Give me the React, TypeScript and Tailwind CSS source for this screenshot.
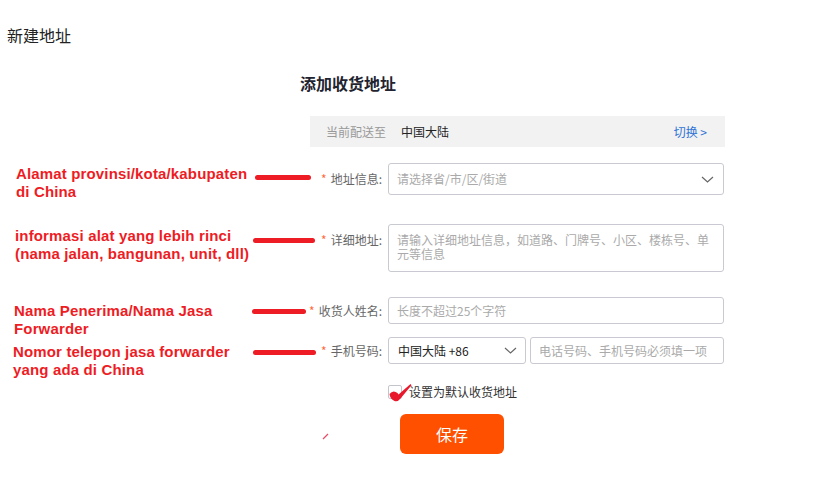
import { ReactNode } from "react";

const cjk = { fontFamily: '"Noto Sans CJK SC", "Noto Sans", sans-serif' };

interface NoteRowProps {
  note: ReactNode;
  notePad: string;
  lineClass: string;
  label: string;
  labelLeading: string;
  rowClass: string;
  children: ReactNode;
}

function NoteRow({ note, notePad, lineClass, label, labelLeading, rowClass, children }: NoteRowProps) {
  return (
    <div className={`flex items-start w-[724px] ${rowClass}`}>
      {/* annotation */}
      <div
        className={`w-[252px] shrink-0 font-bold text-[15px] leading-[18px] tracking-[0.15px] text-[#ee1c24] whitespace-nowrap ${notePad}`}
        style={{ fontFamily: '"Liberation Sans", Arial, sans-serif' }}
      >
        {note}
      </div>
      <div className={`shrink-0 h-[4.5px] rounded-full bg-[#ee1c24] ${lineClass}`} />
      {/* label */}
      <div className={`flex-1 text-right pr-[6px] text-[12px] text-[#666] whitespace-nowrap ${labelLeading}`}>
        <span className="text-[#ff6a3d] mr-[4px]">*</span>
        {label}:
      </div>
      <div className="w-[336px] shrink-0">{children}</div>
    </div>
  );
}

function Chevron() {
  return (
    <svg width="13" height="7" viewBox="0 0 13 7" fill="none">
      <polyline points="1,1 6.5,6 12,1" stroke="#666" strokeWidth="1.2" />
    </svg>
  );
}

export default function App() {
  return (
    <div className="w-[832px] h-[491px] bg-white overflow-hidden text-[#333]" style={cjk}>
      {/* page title */}
      <p className="pt-[26px] pl-[7px] text-[16px] leading-[18px] text-[#222]">新建地址</p>

      <h1 className="ml-[300px] mt-[28px] text-[16px] leading-[22px] font-bold text-[#1f2430]">添加收货地址</h1>

      {/* delivery region bar */}
      <div className="ml-[310px] mt-[22px] w-[415px] h-[31px] bg-[#f2f2f2] flex items-center pl-[16px] pr-[18px] text-[12px]">
        <span className="text-[#999]">当前配送至</span>
        <span className="ml-[15px] text-[#222]">中国大陆</span>
        <span className="ml-auto text-[#2f73d6]">切换 &gt;</span>
      </div>

      {/* address */}
      <NoteRow
        rowClass="mt-[16px] h-[32px]"
        notePad="pl-[16px] mt-[2px]"
        lineClass="ml-[3px] w-[56px] mt-[12px]"
        label="地址信息"
        labelLeading="leading-[32px]"
        note={
          <>
            Alamat provinsi/kota/kabupaten
            <br />
            di China
          </>
        }
      >
        <div className="h-[32px] border border-[#c9c9d2] rounded-[3px] flex items-center pl-[8px] pr-[9px] text-[12px] text-[#aaa]">
          <span>请选择省/市/区/街道</span>
          <span className="ml-auto flex">
            <Chevron />
          </span>
        </div>
      </NoteRow>

      {/* detail */}
      <NoteRow
        rowClass="mt-[29px] h-[48px]"
        notePad="pl-[15px] mt-[3px]"
        lineClass="ml-[1px] w-[62px] mt-[14px]"
        label="详细地址"
        labelLeading="leading-[32px]"
        note={
          <>
            informasi alat yang lebih rinci
            <br />
            (nama jalan, bangunan, unit, dll)
          </>
        }
      >
        <textarea
          className="block w-full h-[48px] border border-[#c9c9d2] rounded-[3px] pl-[8px] pr-[8px] pt-[8px] text-[12px] leading-[14px] resize-none overflow-hidden outline-none placeholder:text-[#aaa]"
          style={cjk}
          placeholder="请输入详细地址信息，如道路、门牌号、小区、楼栋号、单元等信息"
        />
      </NoteRow>

      {/* name */}
      <NoteRow
        rowClass="mt-[25px] h-[27px]"
        notePad="pl-[14px] mt-[5px]"
        lineClass="ml-0 w-[54px] mt-[12px]"
        label="收货人姓名"
        labelLeading="leading-[27px]"
        note={
          <>
            Nama Penerima/Nama Jasa
            <br />
            Forwarder
          </>
        }
      >
        <input
          className="block w-full h-[27px] border border-[#c9c9d2] rounded-[3px] px-[8px] text-[12px] outline-none placeholder:text-[#aaa]"
          style={cjk}
          placeholder="长度不超过25个字符"
        />
      </NoteRow>

      {/* phone */}
      <NoteRow
        rowClass="mt-[13px] h-[27px]"
        notePad="pl-[13px] mt-[6px]"
        lineClass="ml-[1px] w-[63px] mt-[13px]"
        label="手机号码"
        labelLeading="leading-[27px]"
        note={
          <>
            Nomor telepon jasa forwarder
            <br />
            yang ada di China
          </>
        }
      >
        <div className="flex gap-[4px]">
          <div className="w-[138px] h-[27px] border border-[#c9c9d2] rounded-[3px] flex items-center pl-[9px] pr-[8px] text-[12px] text-[#222]">
            <span>中国大陆 +86</span>
            <span className="ml-auto flex">
              <Chevron />
            </span>
          </div>
          <input
            className="flex-1 min-w-0 h-[27px] border border-[#c9c9d2] rounded-[3px] px-[8px] text-[12px] outline-none placeholder:text-[#aaa]"
            style={cjk}
            placeholder="电话号码、手机号码必须填一项"
          />
        </div>
      </NoteRow>

      {/* default checkbox */}
      <div className="ml-[388px] mt-[20px] flex items-center h-[16px]">
        <div className="relative w-[14px] h-[14px] border border-[#c4c4cc] rounded-[2px] bg-white">
          <svg className="absolute left-[-1px] top-[-5px]" width="26" height="22" viewBox="0 0 26 22">
            <path
              d="M1.5 13 Q5 8.5 9.5 12 L10.5 13.5 L22.5 3 L23.5 4.2 L12.5 17.5 Q10 21 6.5 20 Q2 18 1.5 13 Z"
              fill="#e8192c"
            />
          </svg>
        </div>
        <span className="ml-[7px] text-[12px] text-[#333]">设置为默认收货地址</span>
      </div>

      {/* save */}
      <div className="flex items-start mt-[14px]">
        <svg className="ml-[322px] mt-[19px] shrink-0" width="7" height="7" viewBox="0 0 7 7">
          <line x1="1" y1="6" x2="6" y2="1" stroke="#e84d68" strokeWidth="1.2" />
        </svg>
        <button className="ml-[71px] w-[104px] h-[40px] rounded-[6px] bg-[#ff5000] text-white text-[16px]">
          保存
        </button>
      </div>
    </div>
  );
}
